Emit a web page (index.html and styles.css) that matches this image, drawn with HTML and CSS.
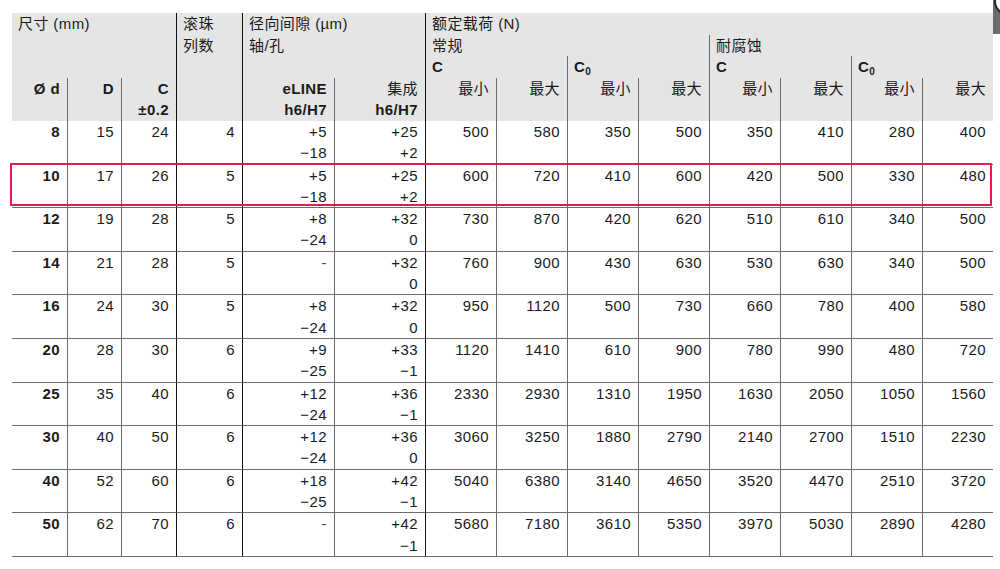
FILE: index.html
```html
<!DOCTYPE html>
<html lang="zh-CN">
<head>
<meta charset="utf-8">
<title>滚珠轴承尺寸表</title>
<link rel="stylesheet" href="styles.css">
</head>
<body>
<div class="page">
  <div class="corner"></div>
  <table class="spec">
    <colgroup>
      <col class="c-d"><col class="c-D"><col class="c-C"><col class="c-rows"><col class="c-eline"><col class="c-int">
      <col class="c-load"><col class="c-load"><col class="c-load"><col class="c-load">
      <col class="c-load"><col class="c-load"><col class="c-load"><col class="c-load">
    </colgroup>
    <thead>
      <tr>
        <th colspan="3" rowspan="3" class="l">尺寸 (mm)</th>
        <th rowspan="4" class="l bd">滚珠<br>列数</th>
        <th colspan="2" rowspan="3" class="l bd">径向间隙 (µm)<br>轴/孔</th>
        <th colspan="8" class="l bd">额定载荷 (N)</th>
      </tr>
      <tr>
        <th colspan="4" class="l bd">常规</th>
        <th colspan="4" class="l bg">耐腐蚀</th>
      </tr>
      <tr>
        <th colspan="2" class="l bd b">C</th>
        <th colspan="2" class="l bg b">C<sub>0</sub></th>
        <th colspan="2" class="l bg b">C</th>
        <th colspan="2" class="l bg b">C<sub>0</sub></th>
      </tr>
      <tr>
        <th class="b">Ø d</th>
        <th class="bg b">D</th>
        <th class="bg b">C<br>±0.2</th>
        <th class="bd b">eLINE<br>h6/H7</th>
        <th class="bg">集成<br><b>h6/H7</b></th>
        <th class="bd">最小</th><th class="bg">最大</th>
        <th class="bg">最小</th><th class="bg">最大</th>
        <th class="bg">最小</th><th class="bg">最大</th>
        <th class="bg">最小</th><th class="bg">最大</th>
      </tr>
    </thead>
    <tbody>
      <tr><td class="b">8</td><td class="bg">15</td><td class="bg">24</td><td class="bd">4</td><td class="bd">+5<br>−18</td><td class="bg">+25<br>+2</td><td class="bd">500</td><td class="bg">580</td><td class="bg">350</td><td class="bg">500</td><td class="bg">350</td><td class="bg">410</td><td class="bg">280</td><td class="bg">400</td></tr>
      <tr><td class="b">10</td><td class="bg">17</td><td class="bg">26</td><td class="bd">5</td><td class="bd">+5<br>−18</td><td class="bg">+25<br>+2</td><td class="bd">600</td><td class="bg">720</td><td class="bg">410</td><td class="bg">600</td><td class="bg">420</td><td class="bg">500</td><td class="bg">330</td><td class="bg">480</td></tr>
      <tr><td class="b">12</td><td class="bg">19</td><td class="bg">28</td><td class="bd">5</td><td class="bd">+8<br>−24</td><td class="bg">+32<br>0</td><td class="bd">730</td><td class="bg">870</td><td class="bg">420</td><td class="bg">620</td><td class="bg">510</td><td class="bg">610</td><td class="bg">340</td><td class="bg">500</td></tr>
      <tr><td class="b">14</td><td class="bg">21</td><td class="bg">28</td><td class="bd">5</td><td class="bd"><span class="dash">-</span></td><td class="bg">+32<br>0</td><td class="bd">760</td><td class="bg">900</td><td class="bg">430</td><td class="bg">630</td><td class="bg">530</td><td class="bg">630</td><td class="bg">340</td><td class="bg">500</td></tr>
      <tr><td class="b">16</td><td class="bg">24</td><td class="bg">30</td><td class="bd">5</td><td class="bd">+8<br>−24</td><td class="bg">+32<br>0</td><td class="bd">950</td><td class="bg">1120</td><td class="bg">500</td><td class="bg">730</td><td class="bg">660</td><td class="bg">780</td><td class="bg">400</td><td class="bg">580</td></tr>
      <tr><td class="b">20</td><td class="bg">28</td><td class="bg">30</td><td class="bd">6</td><td class="bd">+9<br>−25</td><td class="bg">+33<br>−1</td><td class="bd">1120</td><td class="bg">1410</td><td class="bg">610</td><td class="bg">900</td><td class="bg">780</td><td class="bg">990</td><td class="bg">480</td><td class="bg">720</td></tr>
      <tr><td class="b">25</td><td class="bg">35</td><td class="bg">40</td><td class="bd">6</td><td class="bd">+12<br>−24</td><td class="bg">+36<br>−1</td><td class="bd">2330</td><td class="bg">2930</td><td class="bg">1310</td><td class="bg">1950</td><td class="bg">1630</td><td class="bg">2050</td><td class="bg">1050</td><td class="bg">1560</td></tr>
      <tr><td class="b">30</td><td class="bg">40</td><td class="bg">50</td><td class="bd">6</td><td class="bd">+12<br>−24</td><td class="bg">+36<br>0</td><td class="bd">3060</td><td class="bg">3250</td><td class="bg">1880</td><td class="bg">2790</td><td class="bg">2140</td><td class="bg">2700</td><td class="bg">1510</td><td class="bg">2230</td></tr>
      <tr><td class="b">40</td><td class="bg">52</td><td class="bg">60</td><td class="bd">6</td><td class="bd">+18<br>−25</td><td class="bg">+42<br>−1</td><td class="bd">5040</td><td class="bg">6380</td><td class="bg">3140</td><td class="bg">4650</td><td class="bg">3520</td><td class="bg">4470</td><td class="bg">2510</td><td class="bg">3720</td></tr>
      <tr><td class="b">50</td><td class="bg">62</td><td class="bg">70</td><td class="bd">6</td><td class="bd"><span class="dash">-</span></td><td class="bg">+42<br>−1</td><td class="bd">5680</td><td class="bg">7180</td><td class="bg">3610</td><td class="bg">5350</td><td class="bg">3970</td><td class="bg">5030</td><td class="bg">2890</td><td class="bg">4280</td></tr>
    </tbody>
  </table>
  <div class="highlight"></div>
</div>
</body>
</html>
```

FILE: styles.css
```css
html, body {
  margin: 0;
  padding: 0;
  background: #ffffff;
}

body {
  font-family: "Liberation Sans", Arial, "Noto Sans CJK SC", sans-serif;
  font-size: 15px;
  letter-spacing: 0.4px;
  color: #1b1b1b;
}

.page {
  position: relative;
  padding: 13px 0 0 12px;
}

.spec {
  table-layout: fixed;
  width: 981px;
  border-collapse: separate;
  border-spacing: 0;
}

.c-d { width: 55px; }
.c-D { width: 54px; }
.c-C { width: 55px; }
.c-rows { width: 66px; }
.c-eline { width: 92px; }
.c-int { width: 91px; }
.c-load { width: 71px; }

.spec th,
.spec td {
  padding: 0 7px 0 6px;
  vertical-align: top;
  text-align: right;
  white-space: nowrap;
  font-weight: normal;
}

.spec th {
  background: #e5e5e5;
  line-height: 21.6px;
}

.spec tbody tr {
  height: 43.6px;
}

.spec td {
  line-height: 21.3px;
  border-bottom: 1px solid #6e6e6e;
}

.spec .l {
  text-align: left;
}

.spec .b,
.spec b {
  font-weight: bold;
}

.spec .bd {
  border-left: 1px solid #111111;
}

.spec .bg {
  border-left: 1px solid #6a6a6a;
}

.spec sub {
  font-size: 10px;
  line-height: 0;
  vertical-align: -3px;
  letter-spacing: 0;
}

.dash {
  color: #444;
}

.highlight {
  position: absolute;
  left: 10px;
  top: 163px;
  width: 982px;
  height: 43px;
  border: 2px solid #e31b4f;
  box-sizing: border-box;
  pointer-events: none;
}

.corner {
  position: absolute;
  top: 0;
  right: 0;
  width: 7px;
  height: 34px;
  background: #6b6b6b;
  overflow: hidden;
}

.corner::before {
  content: "";
  position: absolute;
  left: 1px;
  top: -14px;
  width: 26px;
  height: 26px;
  border: 2px solid #222;
  border-radius: 50%;
  background: #ffffff;
}
```
